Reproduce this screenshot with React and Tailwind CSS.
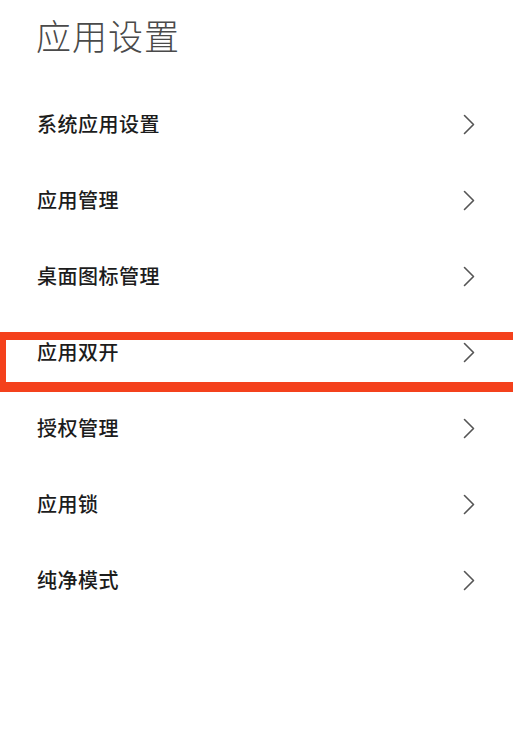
const items = ['系统应用设置', '应用管理', '桌面图标管理', '应用双开', '授权管理', '应用锁', '纯净模式'];

function Chevron() {
  return (
    <svg width="12" height="21" viewBox="0 0 12 21" fill="none" stroke="#555" strokeWidth="1.6" strokeLinecap="round" strokeLinejoin="round">
      <polyline points="1.5 1.5 10.5 10.5 1.5 19.5" />
    </svg>
  );
}

export default function App() {
  return (
    <div
      className="relative h-[729px] w-[513px] overflow-hidden bg-white"
      style={{ fontFamily: '"Noto Sans CJK SC", "Noto Sans", sans-serif' }}
    >
      <div className="h-[86px] px-[36px] pt-[11px]">
        <h1 className="text-[35px] font-light leading-[48px] tracking-[1px] text-[#4a4a4a]">应用设置</h1>
      </div>
      <ul>
        {items.map((label, i) => (
          <li key={label} className="relative flex h-[76px] items-center justify-between pl-[37px] pr-[38px]">
            <span className="text-[20px] font-medium leading-none tracking-[0.5px] text-[#1c1c1c]">{label}</span>
            <Chevron />
            {i === 3 && (
              <div className="absolute left-0 right-[-20px] top-[18px] h-[60px] border-t-[8px] border-b-[10px] border-l-[6px] border-[#f4411c]" />
            )}
          </li>
        ))}
      </ul>
    </div>
  );
}
